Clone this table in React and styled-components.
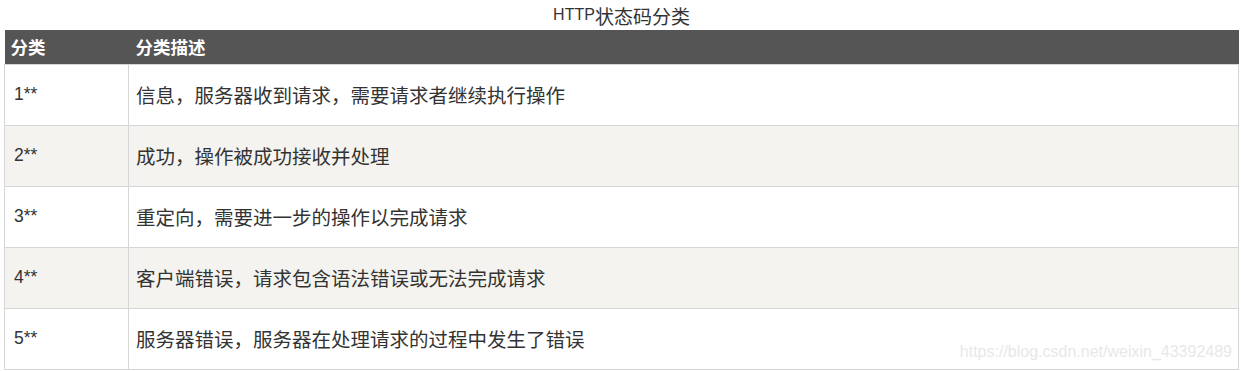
import React from "react";
import styled, { createGlobalStyle } from "styled-components";

const Global = createGlobalStyle`
  html, body { margin: 0; padding: 0; background: #fff; }
  body { font-family: "Liberation Sans", "Noto Sans CJK SC", sans-serif; color: #333; }
`;

const Page = styled.div`
  position: relative;
  width: 1241px;
  height: 371px;
  padding: 0 2px 0 4px;
  box-sizing: border-box;
  overflow: hidden;
`;

const Caption = styled.div`
  height: 30px;
  display: flex;
  align-items: center;
  justify-content: center;
  font-size: 16px;
  color: #333;
  line-height: 1;
`;

const Cjk = styled.span`
  font-family: "Noto Sans CJK SC", sans-serif;
  font-size: ${(p) => p.$size || 19}px;
`;

const Table = styled.table`
  width: 1235px;
  border-collapse: collapse;
  table-layout: fixed;
`;

const Th = styled.th`
  background: #555555;
  color: #fff;
  height: 34px;
  box-sizing: border-box;
  padding: 0 0 0 ${(p) => p.$pad}px;
  text-align: left;
  font-family: "Noto Sans CJK SC", sans-serif;
  font-weight: 700;
  font-size: 17.5px;
  line-height: 1;
`;

const Row = styled.tr`
  background: ${(p) => (p.$alt ? "#f4f3ef" : "#ffffff")};
`;

const Td = styled.td`
  border: 1px solid #d6d6d6;
  height: 61px;
  box-sizing: border-box;
  padding: 0 0 0 ${(p) => p.$pad}px;
  vertical-align: middle;
  font-family: "Liberation Sans", sans-serif;
  font-size: 17.5px;
  color: #333;
`;

const Desc = styled.span`
  font-family: "Noto Sans CJK SC", sans-serif;
  font-size: 19.5px;
  color: #333;
`;

const Watermark = styled.div`
  position: absolute;
  right: 9px;
  top: 343px;
  font-family: "Liberation Sans", sans-serif;
  font-size: 16px;
  color: #e8e8e8;
`;

const rows = [
  ["1**", "信息，服务器收到请求，需要请求者继续执行操作"],
  ["2**", "成功，操作被成功接收并处理"],
  ["3**", "重定向，需要进一步的操作以完成请求"],
  ["4**", "客户端错误，请求包含语法错误或无法完成请求"],
  ["5**", "服务器错误，服务器在处理请求的过程中发生了错误"],
];

export default function App() {
  return (
    <Page>
      <Global />
      <Caption>
        HTTP<Cjk>状态码分类</Cjk>
      </Caption>
      <Table>
        <colgroup>
          <col style={{ width: "124px" }} />
          <col />
        </colgroup>
        <thead>
          <tr>
            <Th $pad={6}>分类</Th>
            <Th $pad={7}>分类描述</Th>
          </tr>
        </thead>
        <tbody>
          {rows.map(([code, desc], i) => (
            <Row key={code} $alt={i % 2 === 1}>
              <Td $pad={9}>{code}</Td>
              <Td $pad={7}>
                <Desc>{desc}</Desc>
              </Td>
            </Row>
          ))}
        </tbody>
      </Table>
      <Watermark>https://blog.csdn.net/weixin_43392489</Watermark>
    </Page>
  );
}
